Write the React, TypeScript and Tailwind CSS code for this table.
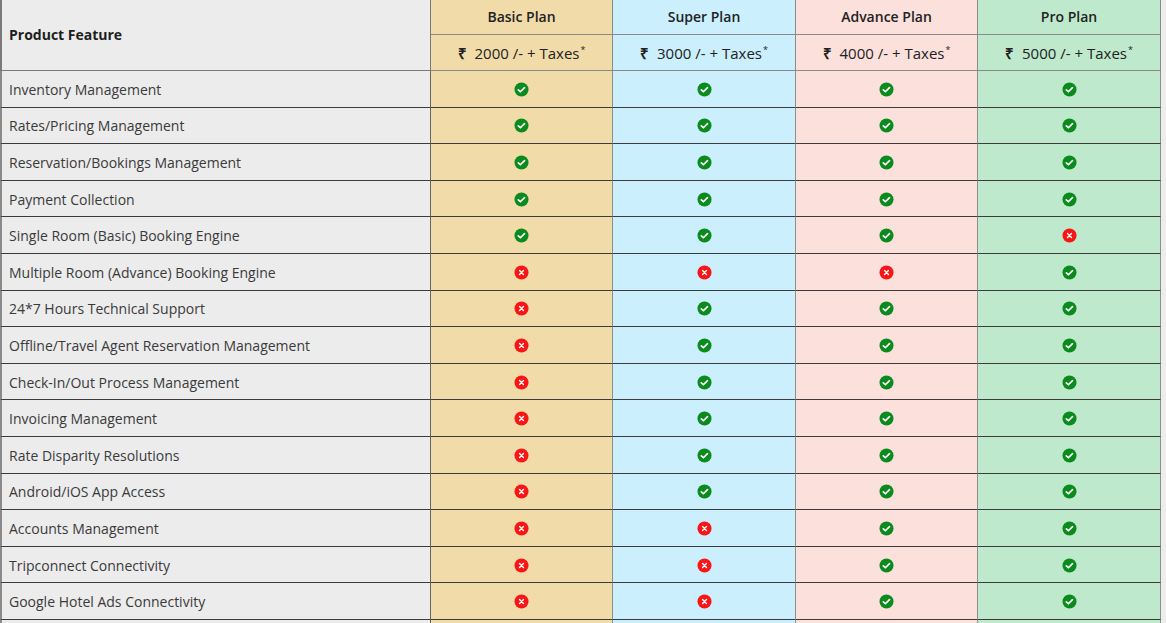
import React from "react"

type Plan = { name: string; price: string; bg: string }

const plans: Plan[] = [
  { name: "Basic Plan", price: "2000", bg: "bg-[#f1dca9]" },
  { name: "Super Plan", price: "3000", bg: "bg-[#cbeffd]" },
  { name: "Advance Plan", price: "4000", bg: "bg-[#fbe0dc]" },
  { name: "Pro Plan", price: "5000", bg: "bg-[#bfe9cc]" },
]

// 1 = included, 0 = not included
const features: [string, number[]][] = [
  ["Inventory Management", [1, 1, 1, 1]],
  ["Rates/Pricing Management", [1, 1, 1, 1]],
  ["Reservation/Bookings Management", [1, 1, 1, 1]],
  ["Payment Collection", [1, 1, 1, 1]],
  ["Single Room (Basic) Booking Engine", [1, 1, 1, 0]],
  ["Multiple Room (Advance) Booking Engine", [0, 0, 0, 1]],
  ["24*7 Hours Technical Support", [0, 1, 1, 1]],
  ["Offline/Travel Agent Reservation Management", [0, 1, 1, 1]],
  ["Check-In/Out Process Management", [0, 1, 1, 1]],
  ["Invoicing Management", [0, 1, 1, 1]],
  ["Rate Disparity Resolutions", [0, 1, 1, 1]],
  ["Android/iOS App Access", [0, 1, 1, 1]],
  ["Accounts Management", [0, 0, 1, 1]],
  ["Tripconnect Connectivity", [0, 0, 1, 1]],
  ["Google Hotel Ads Connectivity", [0, 0, 1, 1]],
]

const cols = "grid grid-cols-[431px_182px_183px_182px_183px]"

function Yes() {
  return (
    <svg width="15" height="15" viewBox="0 0 16 16">
      <circle cx="8" cy="8" r="7.5" fill="#0b8a1e" />
      <path d="M4.6 8.3l2.2 2.1 4.4-4.4" fill="none" stroke="#fff" strokeWidth="1.8" strokeLinecap="round" strokeLinejoin="round" />
    </svg>
  )
}

function No() {
  return (
    <svg width="15" height="15" viewBox="0 0 16 16">
      <circle cx="8" cy="8" r="7.5" fill="#f71515" />
      <path d="M5.9 5.9l4.2 4.2M10.1 5.9l-4.2 4.2" fill="none" stroke="#fff" strokeWidth="1.5" strokeLinecap="round" />
    </svg>
  )
}

export default function App() {
  return (
    <div className="h-[623px] overflow-hidden w-[1166px] bg-[#ededed] font-['Open_Sans',sans-serif] text-[#2b2b2b]">
      <div className="w-[1161px] border-r-[1.5px] border-[#9a9a9a] bg-[#ececec]">
        {/* Header */}
        <div className={cols}>
          <div className="row-span-2 flex items-center border-l-2 border-b border-r border-[#7a7a7a] pl-[7px] pb-[2px] text-[14px] font-bold text-[#1e1e1e]">
            Product Feature
          </div>
          {plans.map((p) => (
            <div key={p.name} className={`${p.bg} h-[35px] flex items-center justify-center pb-[2px] border-r border-b-[1.5px] border-[#8a8a8a] text-[14px] font-semibold text-[#222]`}>
              {p.name}
            </div>
          ))}
          {plans.map((p) => (
            <div key={p.price} className={`${p.bg} h-[36px] flex items-center justify-center pt-[1px] border-r border-b border-[#8a8a8a] text-[15px] font-medium text-[#222]`}>
              <span className="mr-[8px] font-bold">₹</span>
              {p.price} /- + Taxes<sup className="text-[9px] -top-[0.35em] ml-[1px]">*</sup>
            </div>
          ))}
        </div>

        {/* Body */}
        {features.map(([name, vals]) => (
          <div key={name} className={`${cols} h-[36.6px]`}>
            <div className="flex items-center border-l-2 border-r border-b-[1.5px] border-l-[#8a8a8a] border-r-[#666] border-b-[#3c3c3c] pl-[7px] pt-[1px] text-[14px] text-[#3a3a3a]">
              {name}
            </div>
            {vals.map((v, i) => (
              <div key={i} className={`${plans[i].bg} flex items-center justify-center pt-[1px] border-r border-b-[1.5px] border-r-[#8e8e8e] border-b-[#3c3c3c]`}>
                {v ? <Yes /> : <No />}
              </div>
            ))}
          </div>
        ))}
        <div className={`${cols} h-[36px]`}>
          <div className="border-l-2 border-r border-l-[#8a8a8a] border-r-[#666]" />
          {plans.map((p) => (
            <div key={p.name} className={`${p.bg} border-r border-r-[#8e8e8e]`} />
          ))}
        </div>
      </div>
    </div>
  )
}
